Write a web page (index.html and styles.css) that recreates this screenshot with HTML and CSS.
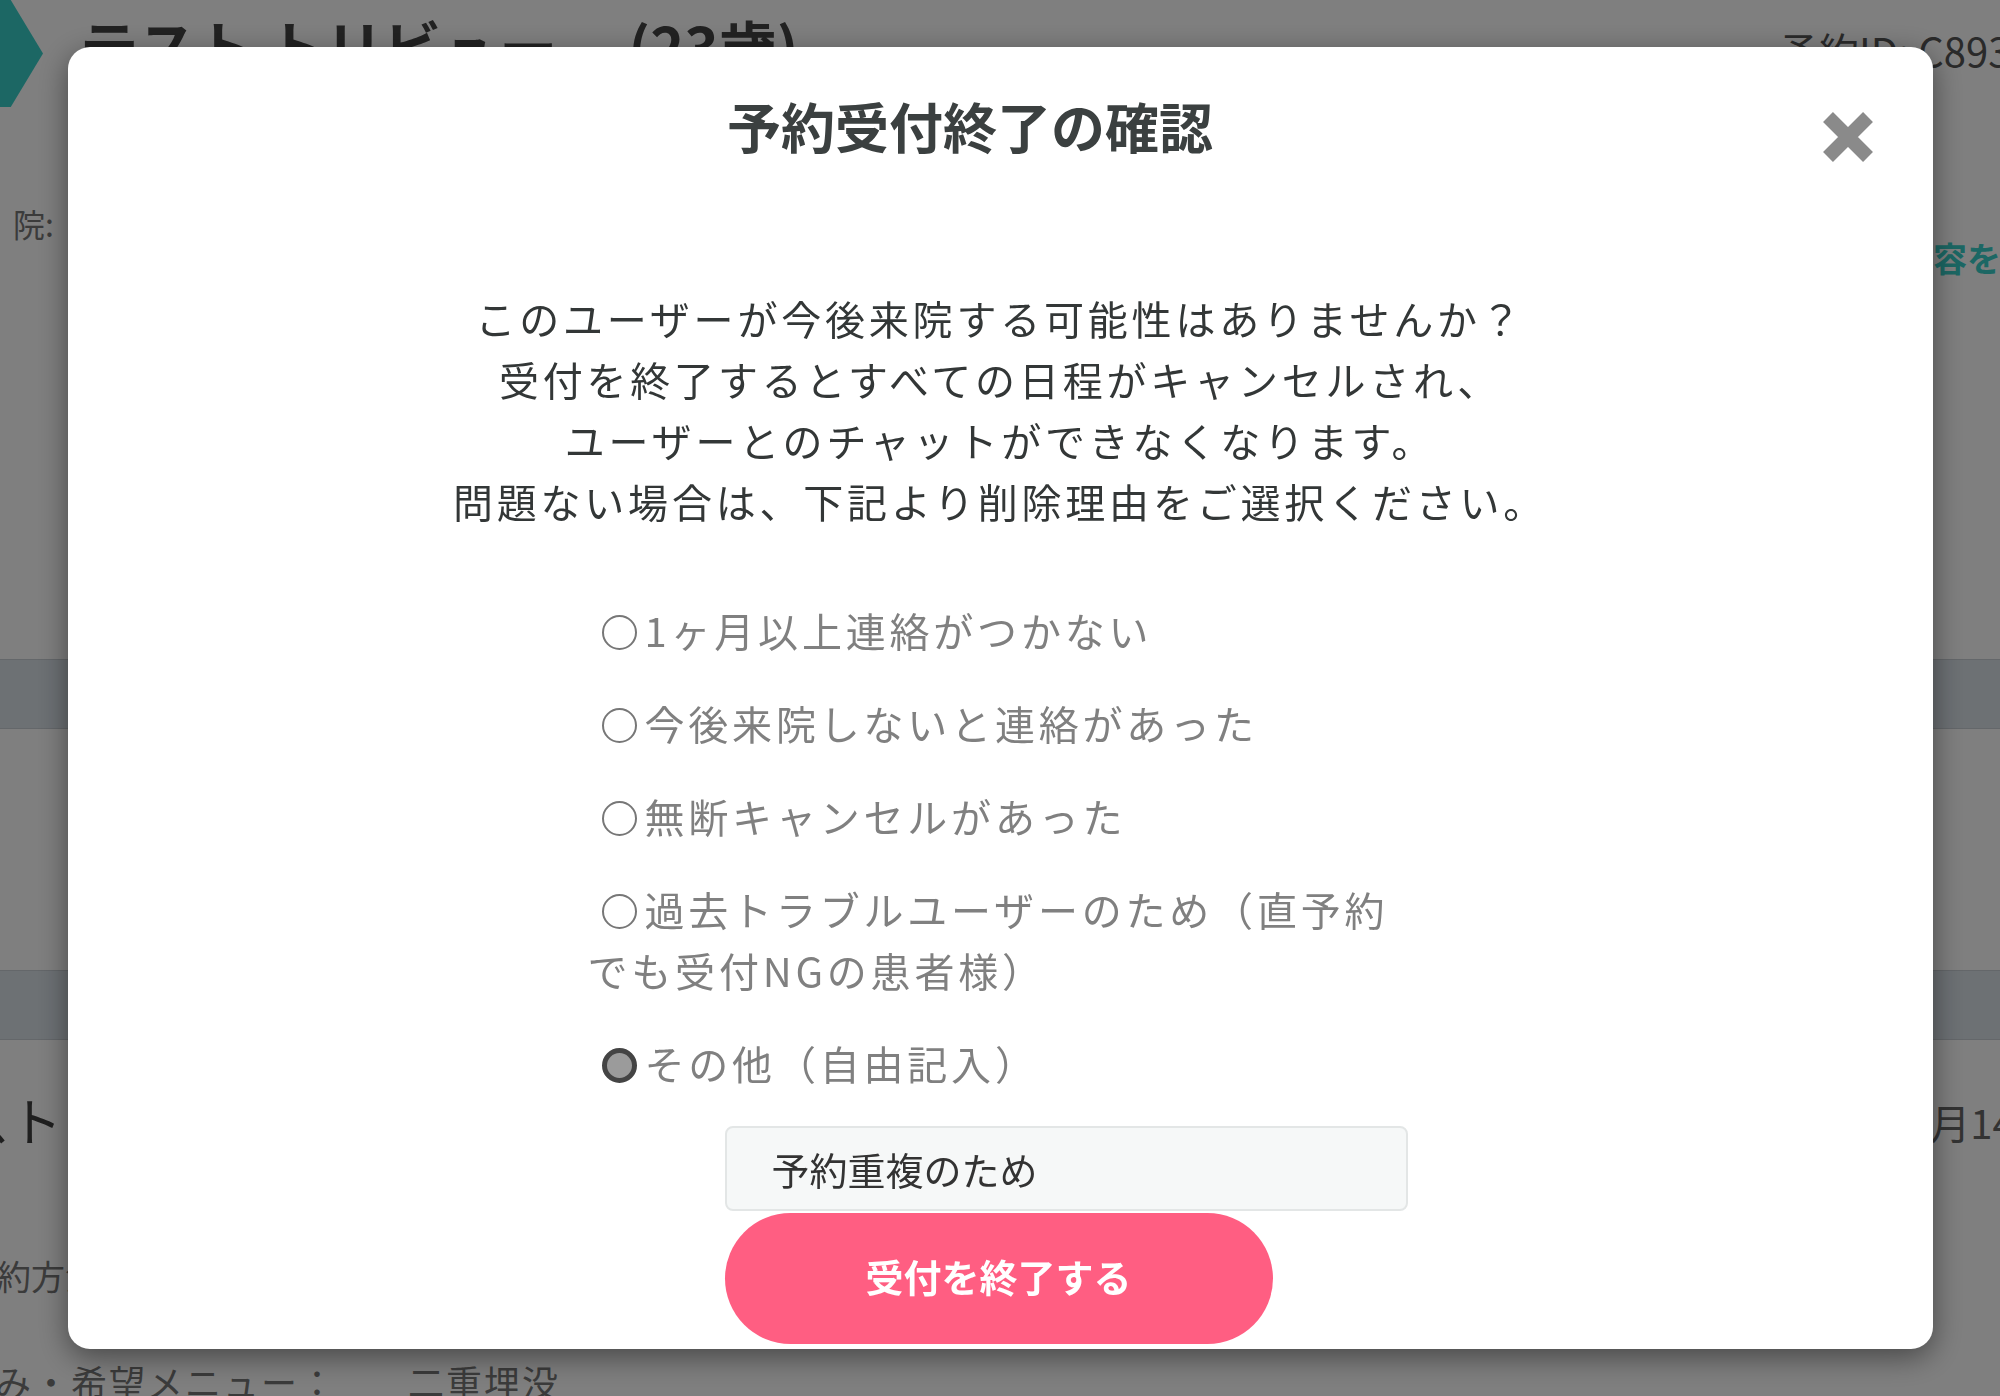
FILE: index.html
```
<!DOCTYPE html>
<html lang="ja">
<head>
<meta charset="utf-8">
<title>予約受付終了の確認</title>
<link rel="stylesheet" href="styles.css">
</head>
<body>
<div class="page">
  <header class="top">
    <div class="chev"></div>
    <div class="name">テスト トリビュー　 (23歳)</div>
    <div class="rid">予約ID: C8932</div>
  </header>
  <section class="meta">
    <div class="meta-label">院:</div>
    <div class="meta-link">内容を変更する</div>
  </section>
  <div class="band"></div>
  <div class="spacer"></div>
  <div class="band"></div>
  <div class="row-name">
    <div class="pname">テスト</div>
    <div class="pdate">2月14日（金）</div>
  </div>
  <div class="row-info"><span class="info-label">予約方法：</span></div>
  <div class="row-info2"><span class="menu-label">お悩み・希望メニュー：</span><span class="menu-val">二重埋没</span></div>
</div>

<div class="overlay">
  <div class="modal">
    <div class="modal-head">
      <h2 class="modal-title">予約受付終了の確認</h2>
      <button class="close" aria-label="閉じる"><svg viewBox="0 0 50 50" width="50" height="50"><path d="M5 5L45 45M45 5L5 45" stroke="#8a8a8a" stroke-width="14" fill="none"/></svg></button>
    </div>
    <p class="lead">このユーザーが今後来院する可能性はありませんか？<br>受付を終了するとすべての日程がキャンセルされ、<br>ユーザーとのチャットができなくなります。<br>問題ない場合は、下記より削除理由をご選択ください。</p>
    <div class="reasons">
      <label class="reason"><span class="radio"></span>1ヶ月以上連絡がつかない</label>
      <label class="reason"><span class="radio"></span>今後来院しないと連絡があった</label>
      <label class="reason"><span class="radio"></span>無断キャンセルがあった</label>
      <label class="reason"><span class="radio"></span>過去トラブルユーザーのため（直予約でも受付NGの患者様）</label>
      <label class="reason"><span class="radio checked"></span>その他（自由記入）</label>
      <div class="free">
        <input class="input" type="text" value="予約重複のため">
        <button class="submit">受付を終了する</button>
      </div>
    </div>
  </div>
</div>
</body>
</html>
```
FILE: styles.css
```
* { box-sizing: border-box; }
body {
  margin: 0;
  font-family: "Noto Sans CJK JP", "Noto Sans", sans-serif;
}
.page {
  width: 2000px;
  height: 1396px;
  overflow: hidden;
  background: #fff;
  color: #555;
}
.top {
  height: 150px;
  display: grid;
  grid-template-columns: 43px 1736px 1fr;
}
.chev {
  height: 107px;
  background: #38cfc8;
  clip-path: polygon(0 0, 25% 0, 100% 50%, 25% 100%, 0 100%);
}
.name {
  padding: 16px 0 0 37px;
  font-size: 58px;
  font-weight: 700;
  line-height: 1;
  color: #444;
  white-space: nowrap;
}
.rid {
  padding-top: 30px;
  font-size: 40px;
  line-height: 1;
  color: #555;
  white-space: nowrap;
}
.meta {
  height: 509px;
  display: grid;
  grid-template-columns: 1899px 1fr;
}
.meta-label {
  padding: 57px 0 0 13px;
  font-size: 32px;
  line-height: 1;
  color: #777;
}
.meta-link {
  padding-top: 91px;
  font-size: 34px;
  font-weight: 700;
  line-height: 1;
  color: #38cfc8;
  white-space: nowrap;
}
.band {
  height: 70px;
  background: #dae2e9;
  border-top: 1px solid #c8ced4;
  border-bottom: 1px solid #c8ced4;
}
.spacer { height: 241px; }
.row-name {
  height: 160px;
  display: grid;
  grid-template-columns: 1908px 1fr;
}
.pname {
  padding-top: 54px;
  margin-left: -94px;
  font-size: 52px;
  line-height: 1;
  color: #3e3e3e;
  white-space: nowrap;
}
.pdate {
  padding-top: 62px;
  font-size: 40px;
  line-height: 1;
  color: #666;
  white-space: nowrap;
}
.row-info {
  height: 100px;
  padding-top: 59px;
  font-size: 34px;
  line-height: 1;
  color: #777;
  white-space: nowrap;
}
.info-label { margin-left: -37px; }
.row-info2 {
  display: flex;
  padding-top: 63px;
  font-size: 36px;
  line-height: 1;
  letter-spacing: 2px;
  color: #777;
  white-space: nowrap;
}
.menu-label {
  flex: none;
  width: 489px;
  margin-left: -81px;
}

.overlay {
  position: fixed;
  inset: 0;
  background: rgba(0, 0, 0, 0.5);
  display: flex;
  align-items: center;
  justify-content: center;
}
.modal {
  width: 1865px;
  height: 1302px;
  background: #fff;
  border-radius: 22px;
  box-shadow: 0 8px 30px rgba(0, 0, 0, 0.45);
  padding-top: 38px;
  overflow: hidden;
}
.modal-head {
  display: flex;
  align-items: flex-start;
  padding: 0 60px 0 50px;
}
.modal-title {
  flex: 1;
  margin: 0;
  text-align: center;
  font-size: 54px;
  line-height: 81px;
  font-weight: 700;
  color: #3b4040;
}
.close {
  width: 50px;
  height: 50px;
  margin-top: 27px;
  padding: 0;
  border: 0;
  background: none;
}
.close svg { display: block; }
.lead {
  margin: 122px 0 0;
  text-align: center;
  font-size: 40px;
  line-height: 61px;
  letter-spacing: 3.8px;
  color: #333737;
}
.reasons {
  width: 825px;
  margin: 68px auto 0;
}
.reason {
  display: block;
  margin-bottom: 32px;
  font-size: 40px;
  line-height: 61px;
  letter-spacing: 3.8px;
  color: #808080;
}
.radio {
  display: inline-block;
  width: 35px;
  height: 35px;
  margin: 0 8px 0 14px;
  border: 2.5px solid #777;
  border-radius: 50%;
  background: #fff;
  vertical-align: -3px;
}
.radio.checked {
  border: 5px solid #444;
  background: #9b9b9b;
}
.free { margin-left: 137px; }
.input {
  display: block;
  width: 683px;
  height: 85px;
  padding: 0 0 0 45px;
  border: 2px solid #e3e6e6;
  border-radius: 8px;
  background: #f6f8f8;
  font-family: "Noto Sans CJK JP", sans-serif;
  font-size: 38px;
  color: #333;
  outline: none;
}
.submit {
  display: block;
  width: 548px;
  height: 131px;
  margin-top: 2px;
  padding: 0 0 6px;
  border: 0;
  border-radius: 66px;
  background: #ff5e82;
  color: #fff;
  font-family: "Noto Sans CJK JP", sans-serif;
  font-size: 38px;
  font-weight: 700;
}
```
